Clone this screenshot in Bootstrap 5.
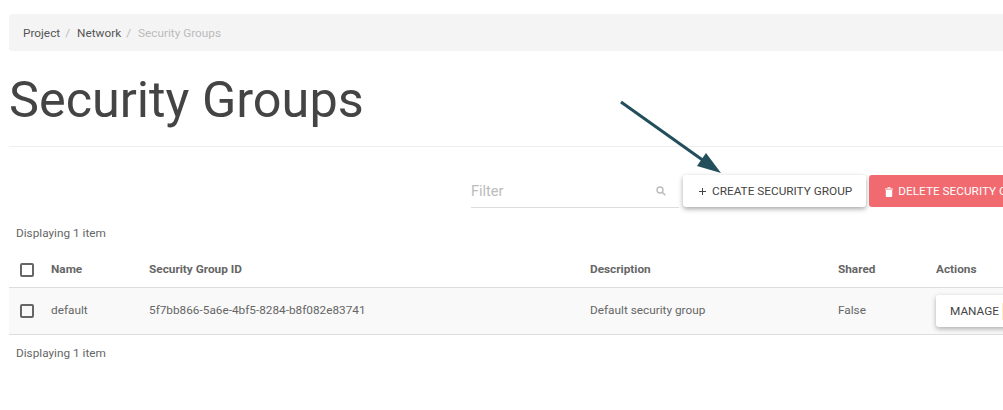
<!doctype html>
<html><head><meta charset="utf-8">
<link href="https://cdn.jsdelivr.net/npm/bootstrap@5.3.0/dist/css/bootstrap.min.css" rel="stylesheet">
<style>
html,body{height:410px;overflow:hidden;background:#fff}
body{font-family:Roboto,sans-serif;font-size:11.8px;color:#666;}
.pg{width:1240px;padding:14px 0 0 9px}
.crumbs{background:#f4f4f4;border-radius:3px;height:37px;padding:2px 14px 0;margin:0;align-items:center;font-size:11.8px;width:1100px}
.crumbs .breadcrumb-item{color:#555;padding-left:5px}
.crumbs .breadcrumb-item:first-child{padding-left:0}
.crumbs .breadcrumb-item+.breadcrumb-item::before{color:#bbb;padding-right:7px;padding-left:0;content:"/"}
.crumbs .breadcrumb-item.active{color:#bbb}
.crumbs a{color:#555;text-decoration:none}
.ttl{font-size:50.4px;font-weight:400;line-height:62px;color:#444;margin:18px 0 0;padding-bottom:15px;border-bottom:1px solid #eee;font-family:Roboto,sans-serif;width:1100px}
.bar{margin-top:28px;width:1100px;padding-left:462px;gap:4px;height:33px}
.fbox{width:208px;height:33px;border-bottom:1px solid #ddd;font-size:14.5px;color:#bbb;padding-right:13px;line-height:34px}
.btn1{height:32px;border:0;border-radius:3px;font-size:11.8px;padding:1px 14px 0 16px;display:inline-flex;align-items:center;gap:6px;white-space:nowrap;box-shadow:0 2px 5px rgba(0,0,0,.35);background:#fff;color:#444}
.btn2{background:#f06a70;color:#fff;box-shadow:none;margin-left:-1px;width:220px;position:relative;gap:5px}
.shown{margin:18px 0 0 7px;line-height:14px;font-size:11.8px;color:#666}
.gridt{margin:0;width:1100px;table-layout:fixed;font-size:11.8px;color:#666;margin-top:13px}
.gridt th,.gridt td{padding:0;vertical-align:middle;color:#666;background:transparent;box-shadow:none}
.gridt thead tr{height:34px;border-bottom:1px solid #ddd}
.gridt th{font-weight:700;border:0;padding-top:1px}
.gridt tbody tr{height:47px;border-bottom:1px solid #ddd;background:#f9f9f9}
.gridt td{border:0;padding-top:1px}
.tick{display:block;width:14px;height:14px;border:2px solid #666;border-radius:2px;margin-left:11px}
.btn3{height:32px;box-shadow:0 2px 5px rgba(0,0,0,.3);width:160px;justify-content:flex-start;padding-left:14px;gap:2px}
.hili{background:#fdf0bd;color:#fdf0bd;margin-left:1px}
.aft{margin-top:11px}
.arrow{position:absolute;left:615px;top:96px}
</style></head><body>
<div class="pg">
<ol class="breadcrumb crumbs"><li class="breadcrumb-item"><a href="#">Project</a></li><li class="breadcrumb-item"><a href="#">Network</a></li><li class="breadcrumb-item active">Security Groups</li></ol>
<h1 class="ttl">Security Groups</h1>
<div class="bar d-flex">
<div class="fbox d-flex justify-content-between"><span>Filter</span><svg width="10" height="10" viewBox="0 0 10 10" class="align-self-center"><circle cx="4" cy="4" r="3" fill="none" stroke="#bbb" stroke-width="1.4"/><path d="M6.2 6.2 9.3 9.3" stroke="#bbb" stroke-width="1.6"/></svg></div>
<button class="btn1"><svg width="7" height="7" viewBox="0 0 7 7"><path d="M3.5 0v7M0 3.5h7" stroke="#444" stroke-width="1"/></svg>CREATE SECURITY GROUP</button>
<button class="btn1 btn2"><svg width="8" height="10" viewBox="0 0 8 10"><path d="M0 1.5h8v1H0zM.8 3h6.4v6.200a.8.8 0 0 1-.8.8H1.600a.8.8 0 0 1-.8-.8zM2.500 .3h3v1h-3z" fill="#fff"/></svg>DELETE SECURITY GROUPS</button>
</div>
<div class="shown">Displaying 1 item</div>
<table class="table gridt"><colgroup><col style="width:42px"><col style="width:98px"><col style="width:441px"><col style="width:248px"><col style="width:98px"><col></colgroup>
<thead><tr><th><span class="tick"></span></th><th>Name</th><th>Security Group ID</th><th>Description</th><th>Shared</th><th>Actions</th></tr></thead>
<tbody><tr><td><span class="tick"></span></td><td>default</td><td>5f7bb866-5a6e-4bf5-8284-b8f082e83741</td><td>Default security group</td><td>False</td><td><button class="btn1 btn3">MANAGE <span class="hili">RULES</span></button></td></tr></tbody></table>
<div class="shown aft">Displaying 1 item</div>
</div>
<svg class="arrow" width="110" height="85" viewBox="615 96 110 85"><path d="M621 102 704 161" stroke="#234e5c" stroke-width="3"/><path d="M697 166 706 153 721 173Z" fill="#234e5c"/></svg>
<script src="https://cdn.jsdelivr.net/npm/bootstrap@5.3.0/dist/js/bootstrap.bundle.min.js"></script>
</body></html>
